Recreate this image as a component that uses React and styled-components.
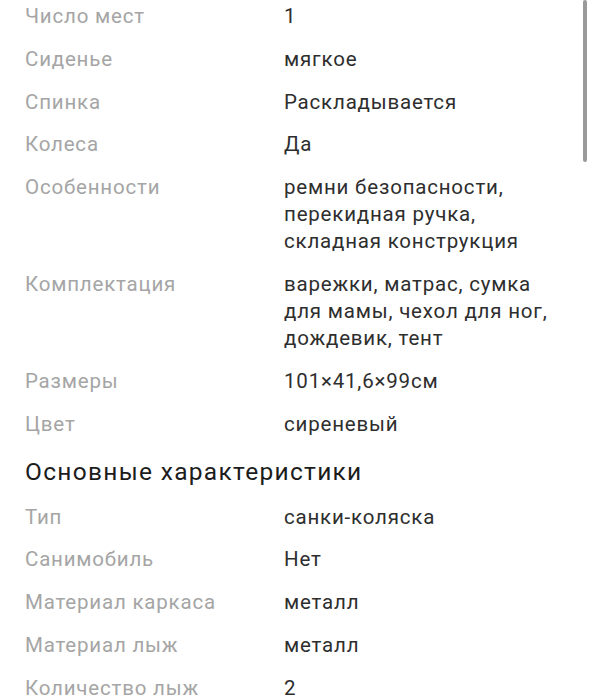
import styled, { createGlobalStyle } from 'styled-components'

const GlobalStyle = createGlobalStyle`
  html, body {
    margin:0;
    padding:0;
    background:#ffffff;
    overflow:hidden;
  }
  body {
    font-family:Roboto, "Noto Sans", Arial, sans-serif;
  }
`

const Page = styled.div`
  position:relative;
  width:592px;
  height:699px;
  overflow:hidden;
  background:#fff;
`

const Content = styled.div`
  padding:3px 0 0 25px;
  display:flex;
  flex-direction:column;
`

const SpecList = styled.dl`
  margin:0;
  display:grid;
  grid-template-columns:259px 1fr;
  row-gap:15.8px;
`

const Label = styled.dt`
  margin:0;
  font-size:20.5px;
  line-height:27px;
  letter-spacing:0.8px;
  color:#a5a5a5;
  white-space:nowrap;
`

const Value = styled.dd`
  margin:0;
  font-size:20.5px;
  line-height:27px;
  letter-spacing:0.8px;
  color:#2e2e2e;
  white-space:nowrap;
`

const SectionTitle = styled.h2`
  margin:19px 0 17px;
  font-size:24.5px;
  line-height:30px;
  letter-spacing:1.3px;
  font-weight:400;
  color:#1c1c1c;
`

const Scrollbar = styled.div`
  position:absolute;
  top:0;
  right:5px;
  width:4px;
  height:162px;
  border-radius:2px;
  background:#9a9a9a;
`

const extra = [
  ['Число мест', '1'],
  ['Сиденье', 'мягкое'],
  ['Спинка', 'Раскладывается'],
  ['Колеса', 'Да'],
  ['Особенности', ['ремни безопасности,', 'перекидная ручка,', 'складная конструкция']],
  ['Комплектация', ['варежки, матрас, сумка', 'для мамы, чехол для ног,', 'дождевик, тент']],
  ['Размеры', '101×41,6×99см'],
  ['Цвет', 'сиреневый'],
]

const main = [
  ['Тип', 'санки-коляска'],
  ['Санимобиль', 'Нет'],
  ['Материал каркаса', 'металл'],
  ['Материал лыж', 'металл'],
  ['Количество лыж', '2'],
]

const Specs = ({items}) => (
  <SpecList>
    {items.map(([k, v]) => [
      <Label key={k + '-l'}>{k}</Label>,
      <Value key={k + '-v'}>
        {Array.isArray(v) ? v.map((line, i) => <div key={i}>{line}</div>) : v}
      </Value>
    ])}
  </SpecList>
)

export default function App() {
  return (
    <>
      <GlobalStyle />
      <Page>
        <Content>
          <Specs items={extra} />
          <SectionTitle>Основные характеристики</SectionTitle>
          <Specs items={main} />
        </Content>
        <Scrollbar />
      </Page>
    </>
  )
}
